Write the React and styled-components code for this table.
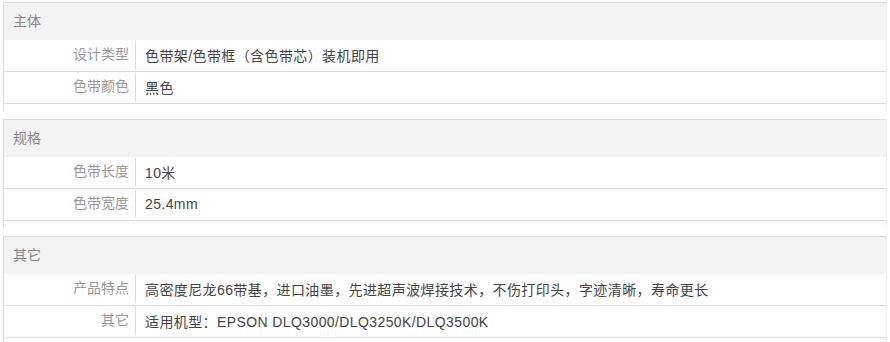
import React from 'react';
import styled, { createGlobalStyle } from 'styled-components';

const GlobalStyle = createGlobalStyle`
  body {
    margin: 0;
    background: #fff;
    font-family: "Liberation Sans", "Noto Sans CJK SC", sans-serif;
  }
`;

const Wrapper = styled.div`
  padding: 2px 0 0 3px;
  width: 884px;
`;

const Section = styled.div`
  border-top: 1px solid #dcdcdc;
  border-left: 1px solid #dcdcdc;
  border-right: 1px solid #f0f0f0;
  padding-bottom: 7px;
  margin-bottom: 8px;
`;

const Header = styled.div`
  height: 37px;
  line-height: 37px;
  padding-left: 9px;
  background: #f3f3f3;
  color: #888;
  font-size: 14px;
`;

const Row = styled.div`
  display: flex;
  align-items: center;
  height: 31px;
  border-bottom: 1px solid #dcdcdc;
  font-size: 14px;
`;

const Label = styled.div`
  width: 125px;
  flex-shrink: 0;
  padding-right: 6px;
  height: 28px;
  line-height: 27px;
  margin: 1px 0 2px;
  text-align: right;
  color: #999;
  border-right: 1px solid #dcdcdc;
`;

const Value = styled.div`
  padding-left: 9px;
  color: #444;
  letter-spacing: 0.4px;
  white-space: nowrap;
  margin-top: -1px;
`;

const groups = [
  {
    title: '主体',
    rows: [
      ['设计类型', '色带架/色带框（含色带芯）装机即用'],
      ['色带颜色', '黑色'],
    ],
  },
  {
    title: '规格',
    rows: [
      ['色带长度', '10米'],
      ['色带宽度', '25.4mm'],
    ],
  },
  {
    title: '其它',
    rows: [
      ['产品特点', '高密度尼龙66带基，进口油墨，先进超声波焊接技术，不伤打印头，字迹清晰，寿命更长'],
      ['其它', '适用机型：EPSON DLQ3000/DLQ3250K/DLQ3500K'],
    ],
  },
];

const App = () => (
  <>
    <GlobalStyle />
    <Wrapper>
      {groups.map((g) => (
        <Section key={g.title}>
          <Header>{g.title}</Header>
          {g.rows.map(([label, value]) => (
            <Row key={label}>
              <Label>{label}</Label>
              <Value>{value}</Value>
            </Row>
          ))}
        </Section>
      ))}
    </Wrapper>
  </>
);

export default App;
